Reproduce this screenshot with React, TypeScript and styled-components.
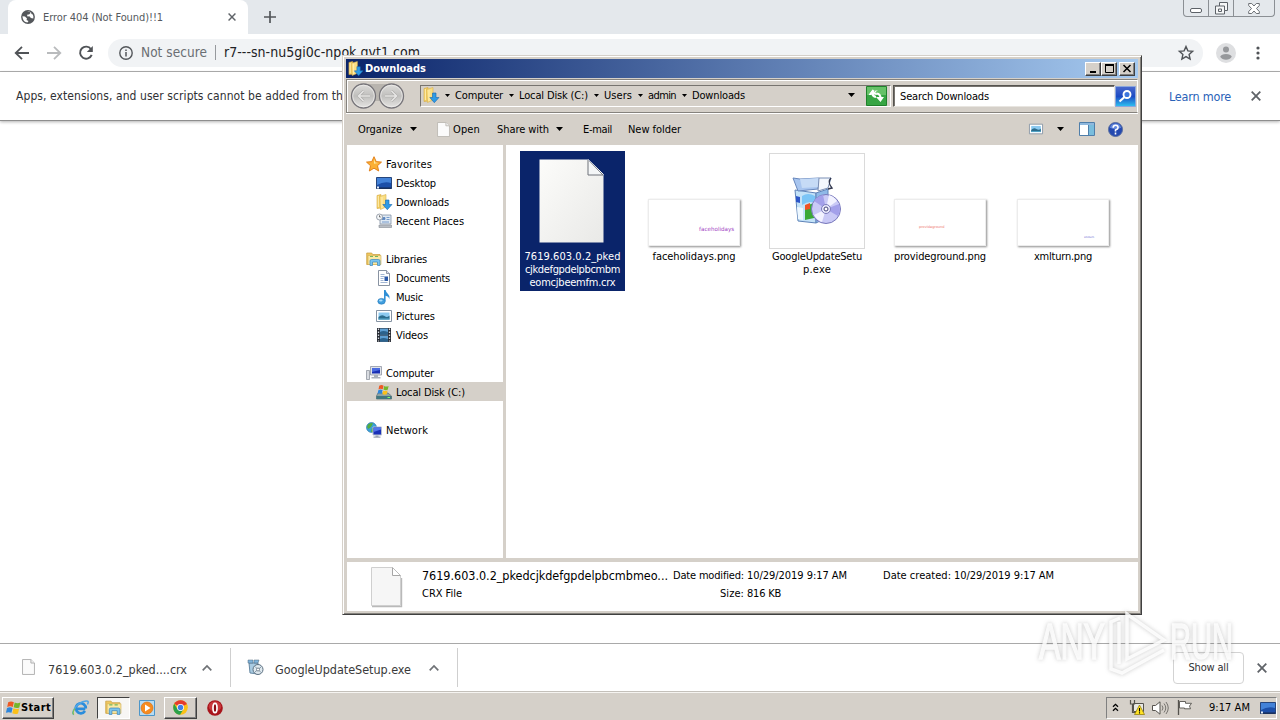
import React, { useLayoutEffect, useRef } from 'react';
import styled, { createGlobalStyle, css } from 'styled-components';

const face = '#d5d0c9';

const Global = createGlobalStyle`
  * { box-sizing: border-box; }
  body { margin: 0; overflow: hidden; background: #fff; }
  svg { display: block; flex: none; overflow: visible; }
`;

/* ---------- text ---------- */

interface TextProps {
  $w: number; $ml?: number; $size?: number; $color?: string; $bold?: boolean; $plain?: boolean; $dy?: number;
}
const TextBox = styled.span<TextProps>`
  display: block;
  flex: none;
  width: ${p => p.$w}px;
  margin-left: ${p => p.$ml ?? 0}px;
  padding-top: ${p => p.$dy ?? 0}px;
  white-space: nowrap;
  font-family: ${p => (p.$plain ? "'DejaVu Sans'" : "'DejaVu Sans Condensed'")}, 'DejaVu Sans', sans-serif;
  font-stretch: ${p => (p.$plain ? 'normal' : 'condensed')};
  font-size: ${p => p.$size ?? 11}px;
  font-weight: ${p => (p.$bold ? 700 : 400)};
  line-height: 13px;
  color: ${p => p.$color ?? '#000'};
`;

/* Tracks the text so that it fills the given width exactly. */
function Text({ children, ...rest }: TextProps & { children: string }) {
  const ref = useRef<HTMLSpanElement>(null);
  useLayoutEffect(() => {
    const el = ref.current!;
    el.style.letterSpacing = '0px';
    const natural = el.getBoundingClientRect().width;
    el.style.letterSpacing = `${(rest.$w - natural) / children.length}px`;
  }, [children, rest.$w]);
  return <TextBox {...rest}><span ref={ref}>{children}</span></TextBox>;
}

const Icon = styled.svg<{ $ml?: number; $mt?: number }>`
  margin-left: ${p => p.$ml ?? 0}px;
  margin-top: ${p => p.$mt ?? 0}px;
`;

/* ---------- browser ---------- */

const Screen = styled.div`
  position: relative;
  width: 1280px;
  height: 720px;
  display: flex;
  flex-direction: column;
  background: #fff;
  overflow: hidden;
`;
const TabStrip = styled.div`
  height: 34px;
  display: flex;
  background: #e4e8ec;
`;
const Tab = styled.div`
  width: 240px;
  height: 34px;
  margin-left: 8px;
  padding-left: 13px;
  display: flex;
  align-items: center;
  background: #fff;
  border-radius: 8px 8px 0 0;
`;
const WindowControls = styled.div`
  width: 92px;
  height: 17px;
  margin-left: auto;
  margin-right: 5px;
  display: flex;
  border: 1px solid #8b8f94;
  border-top: 0;
  border-radius: 0 0 4px 4px;
`;
const WindowControl = styled.div<{ $w: number }>`
  width: ${p => p.$w}px;
  display: flex;
  justify-content: center;
  align-items: center;
  & + & { border-left: 1px solid #8b8f94; }
`;
const NavBar = styled.div`
  height: 38px;
  display: flex;
  align-items: center;
  padding-left: 14px;
  border-bottom: 1px solid #b1b1b1;
`;
const Omnibox = styled.div`
  width: 1095px;
  height: 28px;
  margin-left: 15px;
  padding-left: 11px;
  display: flex;
  align-items: center;
  background: #f1f3f5;
  border-radius: 14px;
`;
const UrlDivider = styled.div`
  width: 1px;
  height: 15px;
  margin-left: 8px;
  background: #96999d;
`;
const InfoBar = styled.div`
  height: 49px;
  display: flex;
  align-items: center;
  padding-left: 16px;
  border-bottom: 1px solid #8e8e8e;
  box-shadow: 0 1px 3px rgba(0, 0, 0, .3);
`;
const PageArea = styled.div`flex: 1;`;
const Shelf = styled.div`
  height: 48px;
  display: flex;
  align-items: center;
  border-top: 1px solid #a9a9a9;
`;
const ShelfItem = styled.div<{ $w: number; $pad: number }>`
  width: ${p => p.$w}px;
  height: 39px;
  padding-left: ${p => p.$pad}px;
  display: flex;
  align-items: center;
  border-right: 1px solid #cfcfcf;
`;
const ShowAll = styled.div`
  width: 71px;
  height: 32px;
  margin-left: auto;
  display: flex;
  align-items: center;
  justify-content: center;
  border: 1px solid #d3d3d3;
  border-radius: 4px;
`;
const ShelfClose = styled.div`margin: 0 13px;`;

/* ---------- taskbar ---------- */

const TaskBar = styled.div`
  height: 29px;
  display: flex;
  align-items: center;
  padding: 3px 3px 0 2px;
  background: ${face};
  border-top: 1px solid #c4c0ba;
  box-shadow: inset 0 1px 0 #f6f4f1;
`;
const raised = css`
  border: 1px solid;
  border-color: #fff #404040 #404040 #fff;
  box-shadow: inset -1px -1px 0 #808080;
`;
const sunken = css`
  border: 1px solid;
  border-color: #404040 #fff #fff #404040;
  background: #f7f6f4;
`;
const TaskButton = styled.div<{ $w: number; $ml?: number; $down?: boolean }>`
  width: ${p => p.$w}px;
  height: 22px;
  margin-left: ${p => p.$ml ?? 0}px;
  display: flex;
  align-items: center;
  justify-content: center;
  ${p => (p.$down ? sunken : raised)}
`;
const Tray = styled.div`
  width: 171px;
  height: 22px;
  margin-left: auto;
  padding-left: 5px;
  display: flex;
  align-items: center;
  border: 1px solid;
  border-color: #808080 #fff #fff #808080;
`;
const ShowDesktop = styled.div`margin-left: 10px;`;

/* ---------- explorer window ---------- */

const Explorer = styled.div`
  position: absolute;
  left: 342px;
  top: 55px;
  width: 800px;
  height: 560px;
  display: flex;
  flex-direction: column;
  padding: 2px;
  background: ${face};
  border: 1px solid;
  border-color: #d5d0c9 #404040 #404040 #d5d0c9;
  box-shadow: inset 1px 1px 0 #fff, inset -1px -1px 0 #85827d;
`;
const TitleBar = styled.div`
  height: 19px;
  margin: 1px 1px 0 1px;
  padding: 0 1px 0 2px;
  display: flex;
  align-items: center;
  background: linear-gradient(90deg, #0a246a, #a6caf0);
`;
const CaptionButton = styled.div<{ $ml?: number }>`
  width: 16px;
  height: 14px;
  margin-left: ${p => p.$ml ?? 0}px;
  display: flex;
  align-items: center;
  justify-content: center;
  background: ${face};
  ${raised}
`;
const AddressRow = styled.div`
  height: 34px;
  margin: 1px 1px 0 1px;
  padding-left: 3px;
  display: flex;
  align-items: center;
  border: 1px solid #85827d;
  border-right-color: #fff;
  box-shadow: inset 1px 1px 0 #fff, 0 1px 0 #fff;
`;
const AddressField = styled.div`
  width: 471px;
  height: 22px;
  margin-left: 15px;
  padding: 0 0 2px 2px;
  display: flex;
  align-items: center;
  border: 1px solid;
  border-color: #77746f #fff #fff #77746f;
`;
const SearchField = styled.div`
  width: 222px;
  height: 22px;
  margin-left: 2px;
  padding-left: 6px;
  display: flex;
  align-items: center;
  background: #fff;
  border: 1px solid;
  border-color: #55534f #e8e5e0 #e8e5e0 #55534f;
  box-shadow: inset 1px 1px 0 #77746f;
`;
const CommandBar = styled.div`
  height: 32px;
  padding-left: 13px;
  display: flex;
  align-items: center;
`;
const Body = styled.div`
  height: 413px;
  margin: 0 1px 0 1px;
  display: flex;
  background: #fff;
`;
const Tree = styled.div`
  width: 160px;
  padding-top: 9px;
  border-right: 3px solid ${face};
  border-left: 1px solid ${face};
`;
const TreeRow = styled.div<{ $child?: boolean; $selected?: boolean }>`
  height: 19px;
  padding-left: ${p => (p.$child ? 29 : 19)}px;
  display: flex;
  align-items: center;
  background: ${p => (p.$selected ? face : 'transparent')};
`;
const TreeGap = styled.div`height: 19px;`;
const Files = styled.div`
  flex: 1;
  display: flex;
  align-items: flex-start;
  gap: 18px;
  padding: 6px 0 0 14px;
`;
const FileItem = styled.div<{ $selected?: boolean }>`
  width: 105px;
  height: 140px;
  padding: 2px ${p => (p.$selected ? 0 : 3)}px 0 0;
  display: flex;
  flex-direction: column;
  flex: none;
  align-items: center;
  background: ${p => (p.$selected ? '#0a246a' : 'transparent')};
`;
const Preview = styled.div<{ $page?: boolean }>`
  height: 97px;
  width: 96px;
  padding: ${p => (p.$page ? '0 2px 7px 0' : '0')};
  display: flex;
  align-items: flex-end;
  justify-content: center;
`;
const ImageThumb = styled.div<{ $x: number; $y: number }>`
  width: 92px;
  height: 47px;
  margin-bottom: 4px;
  padding: ${p => p.$y}px 0 0 ${p => p.$x}px;
  background: #fff;
  border: 1px solid #ececec;
  box-shadow: 1px 1px 2px rgba(0, 0, 0, .45);
`;
const Tiny = styled.span<{ $c: string; $s: number }>`
  display: block;
  font: ${p => p.$s}px/8px 'DejaVu Sans', sans-serif;
  color: ${p => p.$c};
`;
const AppThumb = styled.div`
  width: 96px;
  height: 96px;
  margin-bottom: 1px;
  display: flex;
  align-items: center;
  justify-content: center;
  border: 1px solid #dadada;
`;
const Details = styled.div`
  height: 53px;
  margin: 0 1px;
  display: flex;
  background: #fff;
  border-top: 4px solid ${face};
  border-left: 1px solid ${face};
`;
const DetailColumn = styled.div<{ $w: number; $ml: number; $right?: boolean }>`
  width: ${p => p.$w}px;
  margin-left: ${p => p.$ml}px;
  padding-top: 7px;
  display: flex;
  flex-direction: column;
  gap: 5px;
  align-items: ${p => (p.$right ? 'flex-end' : 'flex-start')};
`;
const Watermark = styled.svg`
  position: absolute;
  left: 1030px;
  top: 605px;
  filter: drop-shadow(0 0 2px rgba(60, 60, 60, .32));
`;

/* ---------- icons ---------- */

type IP = { ml?: number; mt?: number; size?: number };

const Arrow = ({ ml, w = 5 }: { ml: number; w?: number }) => (
  <Icon $ml={ml} width={w} height={w === 5 ? 3 : 4} viewBox={w === 5 ? '0 0 5 3' : '0 0 7 4'}>
    <path d={w === 5 ? 'M0 0h5L2.5 3z' : 'M0 0h7L3.5 4z'} fill="#000" />
  </Icon>
);
const Cross = ({ ml, s = 9, c = '#5f6368' }: { ml?: number; s?: number; c?: string }) => (
  <Icon $ml={ml} width={s} height={s} viewBox="0 0 10 10"><path d="M.7.7l8.6 8.6M9.3.7L.7 9.3" stroke={c} strokeWidth="1.8" /></Icon>
);
const DownloadFolder = ({ ml, mt, size = 16 }: IP) => (
  <Icon $ml={ml} $mt={mt} width={size} height={size} viewBox="0 0 16 16">
    <path d="M1 1.500l4-1v13.500l-4 .5z" fill="#f2ce63" stroke="#d7a83c" strokeWidth=".6" />
    <path d="M3.500 2.500l6.500-2v12.500l-5.500 2.500z" fill="#f9dd82" stroke="#d9b14a" strokeWidth=".6" />
    <path d="M2.300 2v11M6 3v11" stroke="#fff0b5" />
    <path d="M9.500 6h3.500v4.500H16L11.300 15.700 6.800 10.500H9.500z" fill="#2e9be6" stroke="#1767ad" strokeWidth=".6" />
  </Icon>
);
const PageIcon = ({ w, h, ml, mt, line = '#a9a9a9' }: { w: number; h: number; ml?: number; mt?: number; line?: string }) => (
  <Icon $ml={ml} $mt={mt} width={w} height={h} viewBox="0 0 12 15" preserveAspectRatio="none">
    <path d="M.5.5h7.7l3.3 3.3v10.7H.5z" fill="#fbfbfb" stroke={line} strokeWidth=".8" />
    <path d="M8.2.5v3.3h3.3" fill="#eee" stroke={line} strokeWidth=".8" />
  </Icon>
);
const MediumPage = () => (
  <Icon $ml={24} $mt={5} width="31" height="40" viewBox="0 0 31 40">
    <path d="M1 39.500h29.500V11" fill="none" stroke="#b9b9b9" strokeWidth="1.400" />
    <path d="M.5.5H21.500L29.500 8.500V38.500H.5z" fill="#f6f6f6" stroke="#cfcfcf" />
    <path d="M21.500.5v8h8" fill="#fff" stroke="#a6a6a6" />
    <path d="M21.500.5l8 8" stroke="#bdbdbd" />
  </Icon>
);
const BigPage = () => (
  <Icon width="66" height="84" viewBox="0 0 66 84">
    <defs><linearGradient id="pg" x1="0" y1="0" x2="1" y2="1"><stop offset="0" stopColor="#fcfcfa" /><stop offset="1" stopColor="#e9e9e7" /></linearGradient></defs>
    <path d="M.5.5h48.500L64.500 15.500V83.500H.5z" fill="url(#pg)" />
    <path d="M49 1v15h15z" fill="#f4f6f7" stroke="#6e737b" />
    <path d="M49 .5L64.500 15.500" stroke="#fff" />
  </Icon>
);
const LibraryIcon = ({ ml, size = 16 }: IP) => (
  <Icon $ml={ml} width={size} height={size} viewBox="0 0 16 16">
    <path d="M.7 2h5l1 1.500H14v10H.7z" fill="#efc75e" stroke="#c79b3a" strokeWidth=".7" />
    <path d="M2 4.500h13v9H2z" fill="#fbe9a4" stroke="#d2ac50" strokeWidth=".6" />
    <path d="M4 5.500h3M9 5.500h3" stroke="#73b65b" />
    <path d="M4 14.500V10q0-1.500 1.500-1.500h7q1.500 0 1.500 1.500v4.500h-2.500V11h-5v3.500z" fill="#79c3ee" stroke="#3b86bd" strokeWidth=".7" />
  </Icon>
);
const StarIcon = () => (
  <Icon width="16" height="16" viewBox="0 0 16 16">
    <path d="M8 .7l2.200 4.900 5.300.5-4 3.600 1.200 5.300L8 12.200 3.300 15l1.200-5.300-4-3.600 5.300-.5z" fill="#fbb034" stroke="#e07b12" strokeWidth=".9" />
    <path d="M8 3l1.300 3.500 3 .4-4.300.8z" fill="#ffe9a0" />
  </Icon>
);
const ScreenIcon = () => (
  <Icon width="16" height="16" viewBox="0 0 16 16">
    <path d="M.5 2.500h15v11H.5z" fill="#1c4fa8" stroke="#27467c" />
    <path d="M1 3h14v5Q8 6 1 10z" fill="#4382d8" />
    <path d="M.5 12.500h15v1.200H.5z" fill="#16294f" />
    <path d="M1 11.500h2v2H1z" fill="#e4eefb" />
  </Icon>
);
const RecentIcon = () => (
  <Icon width="16" height="16" viewBox="0 0 16 16">
    <path d="M4 2h11v9H4z" fill="#dfe9f3" stroke="#8393a6" strokeWidth=".8" />
    <path d="M6 4.500h3v2H6zM10.500 4.500h3M10.500 6.500h3M6 9h7" fill="#5a86c0" stroke="#5a86c0" strokeWidth=".8" />
    <path d="M3 12h12.500v2.500H3z" fill="#b9bec5" stroke="#858b94" strokeWidth=".6" />
    <circle cx="3.500" cy="4" r="3" fill="#f5f7f9" stroke="#929aa5" strokeWidth=".9" />
    <path d="M3.500 2.300V4h1.300" stroke="#444" strokeWidth=".7" fill="none" />
  </Icon>
);
const DocIcon = () => (
  <Icon width="16" height="16" viewBox="0 0 16 16">
    <path d="M2.500.5h8l3 3v12h-11z" fill="#fff" stroke="#7c8797" strokeWidth=".9" />
    <path d="M10.500.5v3h3" fill="#dde" stroke="#7c8797" strokeWidth=".8" />
    <path d="M4.500 4.500h4M4.500 6.500h4M4.500 8.500h3M4.500 10.500h3M4.500 12.500h7" stroke="#8aa3c8" strokeWidth=".8" />
    <path d="M8.500 6.500h3.500v4.500H8.500z" fill="#2d5aa8" />
  </Icon>
);
const MusicIcon = () => (
  <Icon width="16" height="16" viewBox="0 0 16 16">
    <ellipse cx="5.500" cy="12.300" rx="3.700" ry="2.900" fill="#3f9ede" stroke="#2273b6" strokeWidth=".6" />
    <path d="M8 12V1h1.600q.4 2.400 2.400 4t1.500 5q-.8-2.700-3.900-3.300V12z" fill="#2f8fd6" />
    <ellipse cx="4.800" cy="11.500" rx="1.800" ry="1.100" fill="#a9dcfa" />
  </Icon>
);
const PictureIcon = ({ ml, size = 16 }: IP) => (
  <Icon $ml={ml} width={size} height={size} viewBox="0 0 16 16">
    <path d="M.5 2.500h15v11H.5z" fill="#fff" stroke="#8593a3" />
    <path d="M2.500 4.500h11v7h-11z" fill="#8ccaf0" />
    <path d="M2.500 9q3-3 6-1t5-.5v4h-11z" fill="#2b6c8c" />
    <path d="M2.500 10.500h11v1h-11z" fill="#5ab0d4" />
  </Icon>
);
const VideoIcon = () => (
  <Icon width="16" height="16" viewBox="0 0 16 16">
    <path d="M1 1h14v14H1z" fill="#272b33" />
    <path d="M4 1.500h8v6H4zM4 8.500h8v6H4z" fill="#5e9fd3" />
    <path d="M4 5q3-2 8 0v2.500H4zM4 12q3-2 8 0v2.500H4z" fill="#2b628d" />
    <path d="M2.500 1.500v13M13.500 1.500v13" stroke="#d6dbe2" strokeWidth="1.300" strokeDasharray="1.500 1.500" />
  </Icon>
);
const ComputerIcon = () => (
  <Icon width="16" height="16" viewBox="0 0 16 16">
    <path d="M4.500 1.500h11v8.500h-11z" fill="#dfe3ea" stroke="#8f96a3" strokeWidth=".8" />
    <path d="M6 3h8v5.500H6z" fill="#1a2fb5" /><path d="M6 3h8v2L6 7z" fill="#4a6be0" />
    <path d="M8 10h4v2h2.500v1.500h-9V12H8z" fill="#a9b0bb" />
    <path d="M.5 5.500h3v9h-3z" fill="#d9dce1" stroke="#858b95" strokeWidth=".7" />
  </Icon>
);
const flag = (
  <>
    <path d="M1.500 2.200Q4 .5 6.800 2L5.800 6.500Q3.200 5.200.6 6.600z" fill="#ee5a24" />
    <path d="M7.600 2.300Q10 3.700 12.900 2.400L11.900 7Q9.200 8.200 6.600 6.800z" fill="#75b62c" />
    <path d="M.4 7.500Q3 6.200 5.600 7.400L4.600 12Q2 10.800-.6 12z" fill="#2e86dc" />
    <path d="M6.400 7.800Q9 9 11.700 7.900l-1 4.600Q8 13.600 5.400 12.300z" fill="#fbc01a" />
  </>
);
const DiskIcon = () => (
  <Icon width="16" height="16" viewBox="0 0 16 16">
    <path d="M2 9h10l3.500 3v3H.5v-3z" fill="#8fa3a5" stroke="#5c6d70" strokeWidth=".7" />
    <path d="M.5 12h15v3H.5z" fill="#41777f" /><path d="M11.500 13.500h2.500" stroke="#7dfc6c" />
    <g transform="translate(2 0) scale(.82)">{flag}</g>
  </Icon>
);
const NetworkIcon = () => (
  <Icon width="16" height="16" viewBox="0 0 16 16">
    <circle cx="5.500" cy="5.500" r="5" fill="#3aa0d8" stroke="#2572a8" strokeWidth=".6" />
    <path d="M2 2.500q3-2.500 5-1L5 5 2.500 7 1 5zM6 6l3 1-2 3H5z" fill="#53ad3f" />
    <path d="M7 5h8.500v8H7z" fill="#1a30b8" stroke="#b6bfd0" /><path d="M7.500 5.500h7.500v2L7.500 10z" fill="#5276ea" />
    <path d="M9.500 13.500h3v1h2v1.300h-7v-1.300h2z" fill="#9aa3b2" />
  </Icon>
);
const SetupBox = () => (
  <Icon width="50" height="50" viewBox="0 0 50 50">
    <path d="M3 14l21 3v30L6 45z" fill="#c3e2f8" stroke="#5f83b8" />
    <path d="M24 17l12-4v28l-12 6z" fill="#8fb9e8" stroke="#5f83b8" />
    <path d="M1 2l7 1 19-1-1 11-20 2z" fill="#a8c5ef" stroke="#6887bc" />
    <path d="M8 3l2 9 16-1 1-9z" fill="#c6dbf6" />
    <path d="M27 2l12 0-3 10-10 3z" fill="#f3f7fd" stroke="#7b8fb5" />
    <path d="M39 2q-4 4 1 10l-4 1" stroke="#30364d" strokeWidth="1.300" fill="none" />
    <path d="M4 20l4 1v6l-4-1z" fill="#2d56c8" />
    <path d="M10 20q6-4 13 0v7q-6-3-13 2z" fill="#7bc5f6" />
    <path d="M13 30l9-3v15l-9 2z" fill="#3aa935" /><path d="M13 29l5-2v6l-5 1z" fill="#ef5226" />
    <path d="M5 31l6 1v12l-5-1z" fill="#eef8ff" />
    <circle cx="34" cy="33" r="14.500" fill="#c9c9f6" stroke="#7777ba" />
    <path d="M34 33L22 25a14 14 0 0 1 9-6zM34 33l13-5a14 14 0 0 1-1 12z" fill="#a3a0ea" />
    <path d="M34 33l3-14a14 14 0 0 1 8 6zM34 33l-4 13a14 14 0 0 1-8-7z" fill="#f2f2ff" />
    <circle cx="34" cy="33" r="4.500" fill="#e9e9fb" stroke="#7b7bbb" /><circle cx="34" cy="33" r="2" fill="#fff" stroke="#45457c" />
  </Icon>
);
const SmallSetup = ({ ml }: IP) => (
  <Icon $ml={ml} width="17" height="17" viewBox="0 0 17 17">
    <path d="M2 4l9 0v11l-8-1z" fill="#a9cbe2" stroke="#597e9a" strokeWidth=".9" />
    <path d="M1 1h5v3H1zM7 1h5l-1 3H7z" fill="#7fb4dc" stroke="#53687c" strokeWidth=".5" />
    <circle cx="11" cy="10.500" r="5" fill="#dfe9ef" stroke="#5b6f80" />
    <path d="M8 7.500l6 6M8 13l6-5" stroke="#8296a6" /><circle cx="11" cy="10.500" r="1.500" fill="#fff" stroke="#536373" strokeWidth=".7" />
  </Icon>
);
const Chevron = ({ ml }: { ml: number }) => (
  <Icon $ml={ml} width="10" height="6" viewBox="0 0 10 6"><path d="M.7 5.300L5 1l4.300 4.300" fill="none" stroke="#6f7276" strokeWidth="1.700" /></Icon>
);
const NavCircles = () => (
  <Icon width="55" height="28" viewBox="0 0 55 28">
    <defs><linearGradient id="nc" x1="0" y1="0" x2="0" y2="1"><stop offset="0" stopColor="#dedddb" /><stop offset=".5" stopColor="#c0bfbd" /><stop offset="1" stopColor="#e6e5e3" /></linearGradient></defs>
    <path d="M12 2h30v17H12z" fill="#b8b4ae" />
    {[13.5, 41.5].map(x => (
      <g key={x}>
        <circle cx={x} cy="14" r="12" fill="url(#nc)" stroke="#77757a" strokeWidth="1.300" />
        <circle cx={x} cy="14" r="10.800" fill="none" stroke="#f0efee" strokeWidth=".7" />
      </g>
    ))}
    <path d="M20 14H8.500m5-5l-5 5 5 5M35 14h11.500m-5-5l5 5-5 5" stroke="#a9a8a6" strokeWidth="2.600" fill="none" />
    <path d="M20 14H8.500m5-5l-5 5 5 5M35 14h11.500m-5-5l5 5-5 5" stroke="#e6e5e4" strokeWidth="1.700" fill="none" />
  </Icon>
);

/* ---------- sections ---------- */

const Browser = () => (
  <>
    <TabStrip>
      <Tab>
        <Icon width="14" height="14" viewBox="0 0 14 14">
          <circle cx="7" cy="7" r="6.900" fill="#54575b" />
          <path d="M6 1.600L8.500 1.500 9.500 3 8 4.500 6.500 4.500 6 6.200 8.800 6.500 9.800 8 12.300 8.500Q12.700 6 11.800 4.500L10.500 4 10 2.300M1.500 6.200L4 6.500 6 8.500 5.500 10 7.500 11 6.500 12.500Q2 12 1.500 7z" fill="#fff" />
        </Icon>
        <Text $w={120} $ml={8} $size={11} $color="#55595d">Error 404 (Not Found)!!1</Text>
        <Cross ml={65} s={8} />
      </Tab>
      <Icon $ml={16} $mt={11} width="12" height="12" viewBox="0 0 12 12"><path d="M6 0v12M0 6h12" stroke="#53565a" strokeWidth="1.700" /></Icon>
      <WindowControls>
        <WindowControl $w={24}><Icon $mt={5} width="12" height="5" viewBox="0 0 12 5"><rect x=".5" y=".5" width="11" height="4" rx="1.500" fill="#fff" stroke="#5d6268" /></Icon></WindowControl>
        <WindowControl $w={25}><Icon width="13" height="13" viewBox="0 0 13 13"><path d="M4.500.5h8v8h-3v3.500h-9v-8h4z" fill="#f6f7f8" stroke="#5d6268" /><path d="M4.500 4h5v4.500M3.500 7h3v2.500h-3z" fill="none" stroke="#5d6268" /></Icon></WindowControl>
        <WindowControl $w={41}><Icon width="12" height="11" viewBox="0 0 12 11"><path d="M.7.5h3L6 3 8.300.5h3v2L8.500 5.500l2.800 3v2h-3L6 8l-2.300 2.500h-3v-2l2.800-3L.7 2.500z" fill="#fff" stroke="#5d6268" strokeWidth=".9" /></Icon></WindowControl>
      </WindowControls>
    </TabStrip>
    <NavBar>
      <Icon width="15" height="14" viewBox="0 0 15 14"><path d="M15 7H2M8 .8L1.700 7 8 13.200" fill="none" stroke="#505357" strokeWidth="1.800" /></Icon>
      <Icon $ml={18} width="15" height="14" viewBox="0 0 15 14"><path d="M0 7h13M7 .8L13.300 7 7 13.200" fill="none" stroke="#b9bbbd" strokeWidth="1.800" /></Icon>
      <Icon $ml={17} width="14" height="14" viewBox="0 0 14 14"><path d="M12 3.200A6 6 0 1 0 12.700 8.800" fill="none" stroke="#505357" strokeWidth="1.900" /><path d="M13.800 0v6H7.800z" fill="#505357" /></Icon>
      <Omnibox>
        <Icon width="14" height="14" viewBox="0 0 14 14"><circle cx="7" cy="7" r="6.200" fill="none" stroke="#54575b" strokeWidth="1.400" /><path d="M7 6v4.500M7 3.500v1.400" stroke="#54575b" strokeWidth="1.500" /></Icon>
        <Text $w={66} $ml={8} $size={13.5} $color="#6a6e73">Not secure</Text>
        <UrlDivider />
        <Text $w={196} $ml={8} $size={14} $color="#202124">r7---sn-nu5gi0c-npok.gvt1.com</Text>
        <Icon $ml={758} width="16" height="16" viewBox="0 0 16 16"><path d="M8 1.600l1.900 4.300 4.700.4-3.500 3.100 1 4.600L8 11.600 3.900 14l1-4.600L1.400 6.300l4.700-.4z" fill="none" stroke="#505357" strokeWidth="1.400" /></Icon>
      </Omnibox>
      <Icon $ml={13} width="20" height="20" viewBox="0 0 20 20"><circle cx="10" cy="10" r="10" fill="#dedfe1" /><circle cx="10" cy="6.600" r="3" fill="#96989b" /><path d="M4.200 13.800Q5.500 11 10 11t5.800 2.800Q14 16.700 10 16.700t-5.800-2.900z" fill="#96989b" /></Icon>
      <Icon $ml={20} width="4" height="14" viewBox="0 0 4 14"><circle cx="2" cy="2" r="1.600" fill="#505357" /><circle cx="2" cy="7" r="1.600" fill="#505357" /><circle cx="2" cy="12" r="1.600" fill="#505357" /></Icon>
    </NavBar>
    <InfoBar>
      <Text $w={327} $size={12} $color="#303134">Apps, extensions, and user scripts cannot be added from th</Text>
      <Text $w={62} $ml={826} $size={12.5} $color="#2a62b8">Learn more</Text>
      <Cross ml={20} s={10} />
    </InfoBar>
    <PageArea />
    <Shelf>
      <ShelfItem $w={231} $pad={22}>
        <PageIcon w={13} h={16} mt={-2} />
        <Text $w={139} $ml={13} $size={12.5} $color="#3a3a3a" $dy={4}>7619.603.0.2_pked....crx</Text>
        <Chevron ml={15} />
      </ShelfItem>
      <ShelfItem $w={227} $pad={16}>
        <SmallSetup />
        <Text $w={136} $ml={11} $size={12.5} $color="#3a3a3a" $dy={4}>GoogleUpdateSetup.exe</Text>
        <Chevron ml={18} />
      </ShelfItem>
      <ShowAll><Text $w={40} $size={11} $color="#303134">Show all</Text></ShowAll>
      <ShelfClose><Cross s={10} /></ShelfClose>
    </Shelf>
  </>
);

const Task = () => (
  <TaskBar>
    <TaskButton $w={52}>
      <Icon width="16" height="15" viewBox="-1 0 14 14">{flag}</Icon>
      <Text $w={30} $bold $size={11}>Start</Text>
    </TaskButton>
    <Icon $ml={18} width="17" height="16" viewBox="0 0 17 16">
      <path d="M13.300 8.800H5M13 11a5 5 0 1 1 .8-2.500" fill="none" stroke="#2b8ddc" strokeWidth="2.700" />
      <path d="M2 14.500Q-1 14 3 8T14 1q3.500-.5 1.500 3.500" fill="none" stroke="#4fa5e6" strokeWidth="1.500" />
      <path d="M2 14.500Q-.5 13 3 8.500" fill="none" stroke="#8ec63f" strokeWidth="1.200" />
    </Icon>
    <TaskButton $w={33} $ml={8} $down><LibraryIcon size={17} /></TaskButton>
    <Icon $ml={9} width="16" height="16" viewBox="0 0 16 16">
      <path d="M.5.5h15v15H.5z" fill="#b7dcf3" stroke="#4d96c9" /><circle cx="8" cy="8" r="6" fill="#f68b1f" stroke="#d66a0b" strokeWidth=".6" /><path d="M6 4.500L11.500 8 6 11.500z" fill="#fff" />
    </Icon>
    <TaskButton $w={33} $ml={9}>
      <Icon width="15" height="15" viewBox="0 0 16 16">
        <circle cx="8" cy="8" r="7.800" fill="#fbc116" />
        <path d="M8 8L1.300 4A7.800 7.800 0 0 1 14.900 4.300z" fill="#e33b2e" /><path d="M1.300 4A7.800 7.800 0 0 0 7.500 15.800L11 10 8 8 4.600 9.500z" fill="#2aa14b" />
        <circle cx="8" cy="8" r="3.700" fill="#fff" /><circle cx="8" cy="8" r="2.900" fill="#3f80e8" />
      </Icon>
    </TaskButton>
    <Icon $ml={10} width="16" height="16" viewBox="0 0 16 16"><circle cx="8" cy="8" r="7.800" fill="#a8141b" /><ellipse cx="8" cy="6.500" rx="6.300" ry="5" fill="#c9383c" /><ellipse cx="8" cy="8" rx="2" ry="4.700" fill="#8a0b12" stroke="#fff" strokeWidth="1.700" /></Icon>
    <Tray>
      <Icon width="7" height="9" viewBox="0 0 7 9"><path d="M1 3.800L3.500 1.300 6 3.800M1 7.800l2.500-2.500L6 7.800" fill="none" stroke="#000" strokeWidth="1.300" /></Icon>
      <Icon $ml={10} width="16" height="15" viewBox="0 0 16 15">
        <path d="M4.500 3.500h10v8h-10z" fill="#e8e8e4" stroke="#55524d" /><path d="M1.500 0v4h4V0M3.500 4v8.500h5" fill="none" stroke="#55524d" strokeWidth="1.200" />
        <path d="M10.500 5L15.500 14.500h-10z" fill="#ffe224" stroke="#8a7300" strokeWidth=".7" /><path d="M10.500 8v3.500M10.500 12.300v1.200" stroke="#000" strokeWidth="1.100" />
      </Icon>
      <Icon $ml={7} width="17" height="14" viewBox="0 0 17 14">
        <path d="M.5 4.500h3L8 .8v12.400L3.500 9.500h-3z" fill="#fff" stroke="#55524d" /><path d="M10 4.500q2 2.500 0 5M12 2.500q3.500 4.500 0 9M14 1q4.500 6 0 12" fill="none" stroke="#6b6964" strokeWidth=".9" />
      </Icon>
      <Icon $ml={8} width="16" height="15" viewBox="0 0 16 15"><path d="M1.500 0v15" stroke="#55524d" strokeWidth="1.300" /><path d="M2.500 1.500h6v1.800h6l-2 2.800 1 2.700h-6V8h-5z" fill="#fff" stroke="#55524d" strokeWidth=".9" /></Icon>
      <Text $w={41} $ml={16}>9:17 AM</Text>
      <ShowDesktop><ScreenIcon /></ShowDesktop>
    </Tray>
  </TaskBar>
);

const tree: { label: string; w: number; icon: React.ReactNode; child?: boolean; gap?: boolean; selected?: boolean }[] = [
  { label: 'Favorites', w: 46, icon: <StarIcon /> },
  { label: 'Desktop', w: 40, icon: <ScreenIcon />, child: true },
  { label: 'Downloads', w: 53, icon: <DownloadFolder />, child: true },
  { label: 'Recent Places', w: 68, icon: <RecentIcon />, child: true },
  { label: 'Libraries', w: 41, icon: <LibraryIcon />, gap: true },
  { label: 'Documents', w: 54, icon: <DocIcon />, child: true },
  { label: 'Music', w: 27, icon: <MusicIcon />, child: true },
  { label: 'Pictures', w: 39, icon: <PictureIcon />, child: true },
  { label: 'Videos', w: 32, icon: <VideoIcon />, child: true },
  { label: 'Computer', w: 48, icon: <ComputerIcon />, gap: true },
  { label: 'Local Disk (C:)', w: 69, icon: <DiskIcon />, child: true, selected: true },
  { label: 'Network', w: 42, icon: <NetworkIcon />, gap: true },
];
const crumbs: [string, number][] = [['Computer', 48], ['Local Disk (C:)', 69], ['Users', 28], ['admin', 28], ['Downloads', 53]];

const Downloads = () => (
  <Explorer>
    <TitleBar>
      <DownloadFolder size={15} />
      <Text $w={61} $ml={2} $bold $color="#fff">Downloads</Text>
      <CaptionButton $ml={659}><Icon $mt={6} width="6" height="2"><path d="M0 0h6v2H0z" /></Icon></CaptionButton>
      <CaptionButton><Icon width="9" height="9"><path d="M.5 1h8v7.500h-8z" fill="none" stroke="#000" /><path d="M0 0h9v2H0z" /></Icon></CaptionButton>
      <CaptionButton $ml={2}><Icon width="8" height="7" viewBox="0 0 8 7"><path d="M.5 0l7 7M7.500 0l-7 7" stroke="#000" strokeWidth="1.500" /></Icon></CaptionButton>
    </TitleBar>
    <AddressRow>
      <NavCircles />
      <AddressField>
        <DownloadFolder />
        <Arrow ml={6} />
        {crumbs.map(([label, w], i) => (
          <React.Fragment key={label}>
            <Text $w={w} $ml={5}>{label}</Text>
            {i < crumbs.length - 1 && <Arrow ml={6} />}
          </React.Fragment>
        ))}
        <Arrow ml={103} w={7} />
        <Icon $ml={11} $mt={2} width="21" height="20" viewBox="0 0 21 20">
          <path d="M.5.5h20v19H.5z" fill="#37a544" stroke="#20812c" /><path d="M1 1h19v8H1z" fill="#66c168" />
          <path d="M2.500 9L7 3.500 11.500 8.500H8.800Q8.500 5.800 12 4.500 5.500 4 5.300 9z" fill="#fff" />
          <path d="M3 8.500L6.500 3.500 11 8.500zM18 11l-3.500 5-4.500-5z" fill="#fff" />
          <path d="M6.500 7.500q0 3 3.500 3.500M14.500 12q0-4-4-4.500" fill="none" stroke="#fff" strokeWidth="2.200" />
        </Icon>
      </AddressField>
      <SearchField><Text $w={89}>Search Downloads</Text></SearchField>
      <Icon width="21" height="21" viewBox="0 0 21 21">
        <defs><linearGradient id="sb" x1="0" y1="0" x2="0" y2="1"><stop offset="0" stopColor="#4a68cc" /><stop offset=".5" stopColor="#1c4bc4" /><stop offset="1" stopColor="#2fc3f2" /></linearGradient></defs>
        <path d="M.5.5h20v20H.5z" fill="url(#sb)" stroke="#8ba7dd" /><circle cx="12" cy="8.500" r="3.500" fill="#3d76dd" stroke="#fff" strokeWidth="1.900" /><path d="M9.500 11l-5 4.500" stroke="#fff" strokeWidth="2.200" />
      </Icon>
    </AddressRow>
    <CommandBar>
      <Text $w={44}>Organize</Text><Arrow ml={8} w={7} />
      <PageIcon ml={20} w={13} h={15} line="#b9b6b0" /><Text $w={27} $ml={3}>Open</Text>
      <Text $w={52} $ml={17}>Share with</Text><Arrow ml={7} w={7} />
      <Text $w={29} $ml={20}>E-mail</Text>
      <Text $w={53} $ml={16}>New folder</Text>
      <PictureIcon ml={348} size={14} /><Arrow ml={14} w={7} />
      <Icon $ml={15} width="16" height="14" viewBox="0 0 16 14"><path d="M.5.5h15v13H.5z" fill="#fff" stroke="#4f7eaa" /><path d="M1 1h14v2H1z" fill="#8fb8dd" /><path d="M10 3h5v10h-5z" fill="#79bddd" /><path d="M9.500 3v10" stroke="#4f7eaa" /></Icon>
      <Icon $ml={13} width="15" height="15" viewBox="0 0 16 16"><circle cx="8" cy="8" r="7.500" fill="#2449b0" stroke="#5a6f9f" /><path d="M2 6a6.300 6.300 0 0 1 12 0q-6 3-12 0z" fill="#6287dd" /><path d="M5.500 6q0-2.500 2.600-2.500T10.700 6Q10.700 7.300 8 8.500v1.700M8 11.300v1.900" fill="none" stroke="#fff" strokeWidth="1.700" /></Icon>
    </CommandBar>
    <Body>
      <Tree>
        {tree.map(t => (
          <React.Fragment key={t.label}>
            {t.gap && <TreeGap />}
            <TreeRow $child={t.child} $selected={t.selected}>{t.icon}<Text $w={t.w} $ml={4} $dy={1}>{t.label}</Text></TreeRow>
          </React.Fragment>
        ))}
      </Tree>
      <Files>
        <FileItem $selected>
          <Preview $page><BigPage /></Preview>
          <Text $w={96} $color="#fff">7619.603.0.2_pked</Text>
          <Text $w={95} $color="#fff">cjkdefgpdelpbcmbm</Text>
          <Text $w={86} $color="#fff">eomcjbeemfm.crx</Text>
        </FileItem>
        <FileItem>
          <Preview><ImageThumb $x={50} $y={25}><Tiny $c="#a23fc4" $s={5.6}>faceholidays</Tiny></ImageThumb></Preview>
          <Text $w={83}>faceholidays.png</Text>
        </FileItem>
        <FileItem>
          <Preview><AppThumb><SetupBox /></AppThumb></Preview>
          <Text $w={90}>GoogleUpdateSetu</Text>
          <Text $w={28}>p.exe</Text>
        </FileItem>
        <FileItem>
          <Preview><ImageThumb $x={24} $y={23}><Tiny $c="#ee7b74" $s={3.5}>provideground</Tiny></ImageThumb></Preview>
          <Text $w={92}>provideground.png</Text>
        </FileItem>
        <FileItem>
          <Preview><ImageThumb $x={66} $y={34}><Tiny $c="#5f5bd0" $s={2.6}>xmlturn</Tiny></ImageThumb></Preview>
          <Text $w={58}>xmlturn.png</Text>
        </FileItem>
      </Files>
    </Body>
    <Details>
      <MediumPage />
      <DetailColumn $w={246} $ml={20}>
        <Text $w={246} $size={12.5}>7619.603.0.2_pkedcjkdefgpdelpbcmbmeo...</Text>
        <Text $w={40}>CRX File</Text>
      </DetailColumn>
      <DetailColumn $w={71} $ml={5} $right><Text $w={71}>Date modified:</Text><Text $w={24}>Size:</Text></DetailColumn>
      <DetailColumn $w={100} $ml={3}><Text $w={100}>10/29/2019 9:17 AM</Text><Text $w={34}>816 KB</Text></DetailColumn>
      <DetailColumn $w={68} $ml={36}><Text $w={68}>Date created:</Text></DetailColumn>
      <DetailColumn $w={100} $ml={3}><Text $w={100}>10/29/2019 9:17 AM</Text></DetailColumn>
    </Details>
  </Explorer>
);

export default function App() {
  return (
    <Screen>
      <Global />
      <Browser />
      <Task />
      <Downloads />
      <Watermark width="212" height="72" viewBox="0 0 212 72">
        <g fill="#fff" stroke="#fff" strokeWidth="1.500" opacity=".85" fontFamily="'Liberation Sans', Arial, sans-serif" fontSize="50">
          <text x="9" y="54" textLength="66" lengthAdjust="spacingAndGlyphs">ANY</text>
          <text x="140" y="54" textLength="63" lengthAdjust="spacingAndGlyphs">RUN</text>
        </g>
        <g fill="none" stroke="#fff" strokeOpacity=".85" strokeWidth="3.500">
          <path d="M90 13l-9 4v47l11 4L134 45" />
          <path d="M89 17v42" />
          <path d="M97 9v45l37-19z" />
        </g>
      </Watermark>
    </Screen>
  );
}
